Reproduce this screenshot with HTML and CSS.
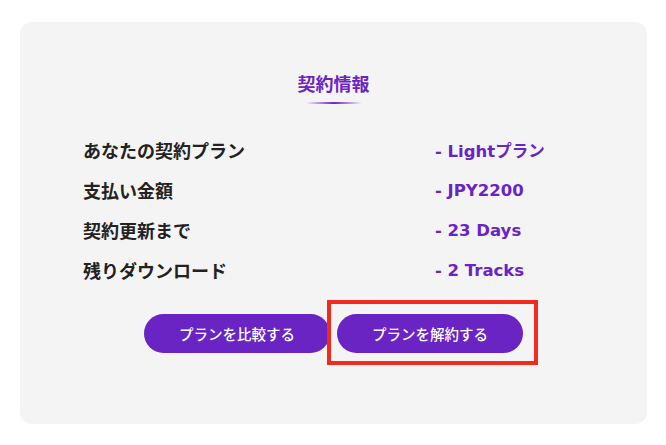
FILE: index.html
```html
<!DOCTYPE html>
<html lang="ja">
<head>
  <meta charset="UTF-8" />
  <meta name="viewport" content="width=device-width, initial-scale=1.0" />
  <title>契約情報</title>
  <link rel="stylesheet" href="styles.css">
</head>
<body>

<div class="card">
  <h2 class="card-title">契約情報</h2>
  <div class="title-line"></div>

  <div class="info">
    <div class="info-label">あなたの契約プラン</div>
    <div class="info-value">- Lightプラン</div>
    <div class="info-label">支払い金額</div>
    <div class="info-value">- JPY2200</div>
    <div class="info-label">契約更新まで</div>
    <div class="info-value">- 23 Days</div>
    <div class="info-label">残りダウンロード</div>
    <div class="info-value">- 2 Tracks</div>
  </div>

  <div class="actions">
    <button class="button">プランを比較する</button>
    <div class="highlight-wrap">
      <button class="button">プランを解約する</button>
      <span class="highlight"></span>
    </div>
  </div>
</div>

</body>
</html>
```

FILE: styles.css
```css
* { margin: 0; padding: 0; box-sizing: border-box; }

body {
  font-family: 'Noto Sans CJK JP', 'Noto Sans', sans-serif;
  background: #fff;
  padding: 22px 19px 21px 20px;
  color: #222;
}

.card {
  background: #f4f4f4;
  border-radius: 12px;
  height: 402px;
  padding: 48px 0 0 63px;
}

.card-title {
  font-size: 18px;
  font-weight: 700;
  color: #6a24c4;
  text-align: center;
  line-height: 26px;
  margin-left: -63px;
}

.title-line {
  width: 56px;
  height: 2px;
  margin: 6px auto 0 calc(50% - 28px - 31px);
  background: linear-gradient(90deg, rgba(106,36,196,0), #6a24c4 50%, rgba(106,36,196,0));
}

.info {
  display: grid;
  grid-template-columns: 352px 1fr;
  grid-auto-rows: 40px;
  align-items: center;
  margin-top: 26px;
}

.info-label {
  font-size: 18px;
  font-weight: 700;
  color: #222;
}

.info-value {
  font-family: 'DejaVu Sans', 'Noto Sans CJK JP', sans-serif;
  font-size: 16.5px;
  font-weight: 700;
  color: #6a24c4;
}

.actions {
  display: flex;
  justify-content: center;
  gap: 7px;
  margin: 24px 0 0 -63px;
}

.button {
  font-family: 'Noto Sans CJK JP', sans-serif;
  background: #6a24c4;
  color: #fff;
  border: none;
  border-radius: 20px;
  height: 39px;
  padding: 0 35px;
  font-size: 14.5px;
  font-weight: 500;
  cursor: pointer;
}

.highlight-wrap {
  position: relative;
}

.highlight {
  position: absolute;
  left: -10px;
  top: -14px;
  right: -15px;
  bottom: -12px;
  border: 4px solid #f22a1f;
  pointer-events: none;
}
```
